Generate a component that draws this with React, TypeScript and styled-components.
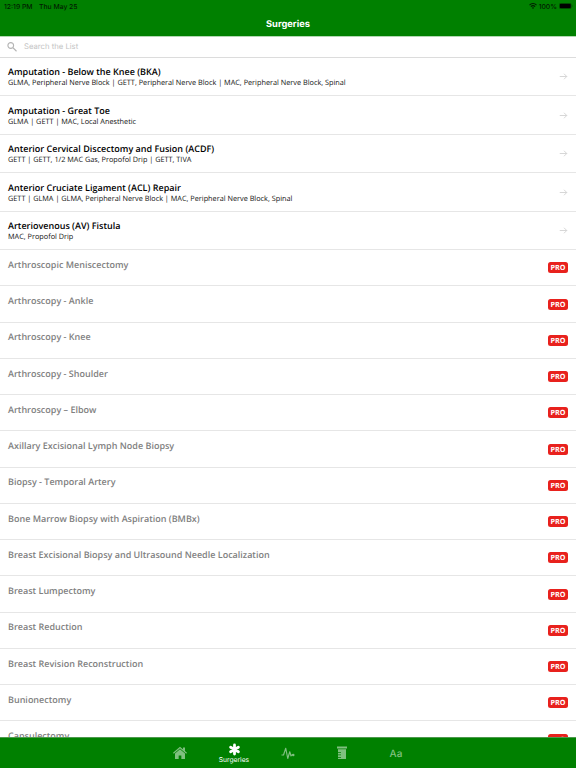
import React from "react";
import styled, { createGlobalStyle } from "styled-components";

const GlobalStyle = createGlobalStyle`
  * { box-sizing: border-box; }
  body { margin: 0; background: #fff; }
`;

const Screen = styled.div`
  display: flex;
  flex-direction: column;
  width: 576px;
  height: 768px;
  overflow: hidden;
  background: #fff;
  font-family: "Open Sans", sans-serif;
  text-rendering: geometricPrecision;
`;

const Header = styled.header`
  flex: none;
  height: 36px;
  background: #008000;
  font-family: Inter, sans-serif;
`;

const StatusBar = styled.div`
  display: flex;
  align-items: center;
  height: 12px;
  padding: 0 3px 0 4px;
  font-size: 6.8px;
  font-weight: 500;
  color: #001c00;
`;

const Clock = styled.span`
  width: 35px;
  white-space: nowrap;
`;

const Indicators = styled.div`
  display: flex;
  align-items: center;
  gap: 2px;
  margin-left: auto;
`;

const Title = styled.h1`
  margin: 0;
  height: 24px;
  line-height: 25px;
  text-align: center;
  font-size: 9.3px;
  font-weight: 700;
  color: #fff;
`;

const SearchBar = styled.div`
  flex: none;
  display: flex;
  align-items: center;
  height: 21.5px;
  padding-left: 7px;
  gap: 7px;
  border-top: 1px solid #b2d8b2;
  border-bottom: 1px solid #dcdcdc;
  font-family: Inter, sans-serif;
  font-size: 7.7px;
  color: #c4c4c4;
`;

const List = styled.main`
  flex: 1;
  min-height: 0;
  overflow: hidden;
`;

const Row = styled.div<{ $locked?: boolean }>`
  display: flex;
  align-items: center;
  justify-content: space-between;
  height: ${(p) => (p.$locked ? 36.25 : 38.5)}px;
  padding: 0 8px;
  border-bottom: 1px solid #e6e6e6;
`;

const RowText = styled.div`
  align-self: flex-start;
  padding-top: 7.75px;
  white-space: nowrap;
`;

const Name = styled.div<{ $locked?: boolean }>`
  font-size: 9px;
  line-height: 13px;
  font-weight: 600;
  color: ${(p) => (p.$locked ? "#808080" : "#000")};
`;

const Detail = styled.div`
  font-size: 7.3px;
  line-height: 10px;
  color: #111;
`;

const ProBadge = styled.span`
  width: 20px;
  height: 11px;
  margin-top: 0.5px;
  border-radius: 2.5px;
  background: #e8211d;
  color: #fff;
  font-size: 7.2px;
  font-weight: 700;
  line-height: 12px;
  text-align: center;
`;

const TabBar = styled.nav`
  flex: none;
  display: flex;
  justify-content: center;
  height: 31px;
  background: #008000;
  border-top: 1px solid #4d994d;
`;

const Tab = styled.div<{ $active?: boolean }>`
  display: flex;
  flex-direction: column;
  align-items: center;
  width: 54px;
  padding-top: ${(p) => (p.$active ? 5 : 8)}px;
  font-family: Inter, sans-serif;
  font-size: 6.7px;
  line-height: 8px;
  color: ${(p) => (p.$active ? "#fff" : "#80c080")};
`;

const LetterIcon = styled.span`
  font-size: 10px;
  line-height: 16px;
  letter-spacing: 0.2px;
  font-weight: 500;
`;

const WifiIcon = () => (
  <svg width="8" height="6" viewBox="0 0 16 12" fill="none" stroke="currentColor" strokeWidth="2.3">
    <path d="M1 4.2C5 .4 11 .4 15 4.2M3.8 7.2C6.2 4.9 9.8 4.9 12.2 7.2" />
    <path d="M5.8 9.4Q8 7.4 10.2 9.4L8 11.8Z" fill="currentColor" stroke="none" />
  </svg>
);

const BatteryIcon = () => (
  <svg width="14" height="6" viewBox="0 0 28 12">
    <rect x=".5" y=".5" width="24" height="11" rx="3" fill="none" stroke="#003a00" />
    <rect x="1.5" y="1.5" width="22" height="9" rx="2" fill="#000" />
    <path d="M26 4q2 2 0 4z" fill="#003a00" />
  </svg>
);

const SearchIcon = () => (
  <svg width="10" height="10" viewBox="0 0 20 20" fill="none" stroke="#b4b4b4" strokeWidth="2.2">
    <circle cx="7.5" cy="7" r="5.7" />
    <path d="M12 11.5l7 7" />
  </svg>
);

const ArrowIcon = () => (
  <svg width="9" height="8" viewBox="0 0 18 16" fill="none" stroke="#d0d0d0" strokeWidth="1.7">
    <path d="M1.5 9h14M10 3.5l5.5 5.5-5.5 5.5" />
  </svg>
);

const HomeIcon = () => (
  <svg width="14" height="14" viewBox="0 0 28 28" fill="currentColor">
    <path d="M14 6.5l10 8.5V26h-7.3v-7h-5.4v7H4V15z" />
    <path d="M.8 14.5L14 3l13.2 11.5" fill="none" stroke="currentColor" strokeWidth="2.3" />
    <path d="M20 3h4v8l-4-3.5z" />
  </svg>
);

const AsteriskIcon = () => (
  <svg width="13" height="13" viewBox="0 0 26 26" stroke="currentColor" strokeWidth="5.6" strokeLinecap="round">
    <path d="M13 4v18M5.2 8.5l15.6 9M5.2 17.5l15.6-9" />
  </svg>
);

const PulseIcon = () => (
  <svg width="14" height="14" viewBox="0 0 28 28" fill="none" stroke="currentColor" strokeWidth="2.3" strokeLinejoin="round">
    <path d="M1 18h4L9.5 4.5l4 20.5 4-13.5L20 20l2-2.5h3" />
    <circle cx="24.5" cy="18" r="2.5" fill="currentColor" stroke="none" />
  </svg>
);

const VialIcon = () => (
  <svg width="12" height="14" viewBox="0 0 24 28" fill="currentColor">
    <path d="M2 1h20v4H2zM4 6.5h16v19.500H4v-2.500h6v-1.400H4v-3.600h6v-1.400H4v-3.600h6v-1.400H4z" />
  </svg>
);

const surgeries: [string, string][] = [
  ["Amputation - Below the Knee (BKA)", "GLMA, Peripheral Nerve Block | GETT, Peripheral Nerve Block | MAC, Peripheral Nerve Block, Spinal"],
  ["Amputation - Great Toe", "GLMA | GETT | MAC, Local Anesthetic"],
  ["Anterior Cervical Discectomy and Fusion (ACDF)", "GETT | GETT, 1/2 MAC Gas, Propofol Drip | GETT, TIVA"],
  ["Anterior Cruciate Ligament (ACL) Repair", "GETT | GLMA | GLMA, Peripheral Nerve Block | MAC, Peripheral Nerve Block, Spinal"],
  ["Arteriovenous (AV) Fistula", "MAC, Propofol Drip"],
];

const lockedSurgeries = [
  "Arthroscopic Meniscectomy",
  "Arthroscopy - Ankle",
  "Arthroscopy - Knee",
  "Arthroscopy - Shoulder",
  "Arthroscopy – Elbow",
  "Axillary Excisional Lymph Node Biopsy",
  "Biopsy - Temporal Artery",
  "Bone Marrow Biopsy with Aspiration (BMBx)",
  "Breast Excisional Biopsy and Ultrasound Needle Localization",
  "Breast Lumpectomy",
  "Breast Reduction",
  "Breast Revision Reconstruction",
  "Bunionectomy",
  "Capsulectomy",
];

export default function App() {
  return (
    <Screen>
      <GlobalStyle />
      <Header>
        <StatusBar>
          <Clock>12:19 PM</Clock>
          <span>Thu May 25</span>
          <Indicators>
            <WifiIcon />
            <span>100%</span>
            <BatteryIcon />
          </Indicators>
        </StatusBar>
        <Title>Surgeries</Title>
      </Header>
      <SearchBar>
        <SearchIcon />
        <span>Search the List</span>
      </SearchBar>
      <List>
        {surgeries.map(([name, detail]) => (
          <Row key={name}>
            <RowText>
              <Name>{name}</Name>
              <Detail>{detail}</Detail>
            </RowText>
            <ArrowIcon />
          </Row>
        ))}
        {lockedSurgeries.map((name) => (
          <Row key={name} $locked>
            <RowText>
              <Name $locked>{name}</Name>
            </RowText>
            <ProBadge>PRO</ProBadge>
          </Row>
        ))}
      </List>
      <TabBar>
        <Tab><HomeIcon /></Tab>
        <Tab $active>
          <AsteriskIcon />
          <span>Surgeries</span>
        </Tab>
        <Tab><PulseIcon /></Tab>
        <Tab><VialIcon /></Tab>
        <Tab><LetterIcon>Aa</LetterIcon></Tab>
      </TabBar>
    </Screen>
  );
}
